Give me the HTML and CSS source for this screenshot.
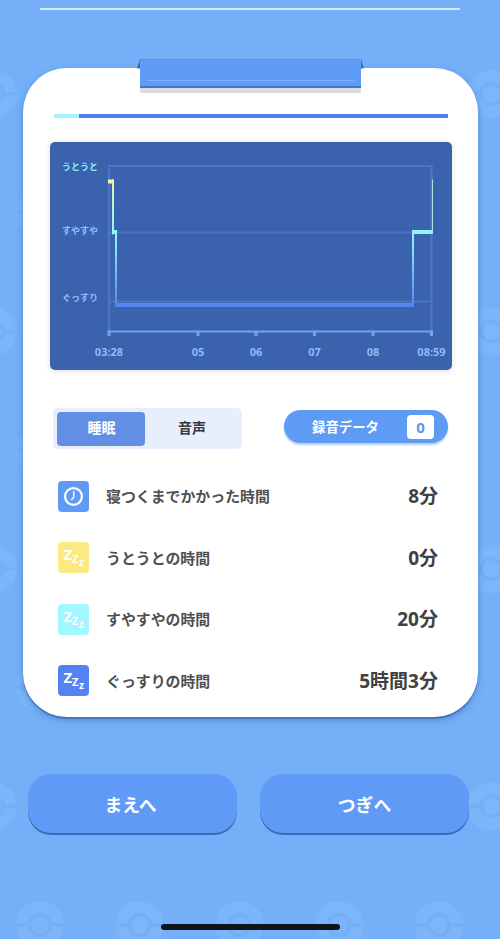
FILE: index.html
```html
<!DOCTYPE html>
<html lang="ja">
<head>
    <meta charset="UTF-8">
    <meta name="viewport" content="width=device-width, initial-scale=1.0">
    <title>睡眠データ</title>
    <link rel="stylesheet" href="styles.css">
</head>
<body>
    <svg class="pattern" width="500" height="939" aria-hidden="true">
        <defs>
            <g id="ball">
                <circle r="17.5" fill="none" stroke="#7cb5fa" stroke-width="13"/>
                <circle r="8.5" fill="#7cb5fa"/>
                <path d="M-24 0H-11M11 0H24" stroke="#74aef7" stroke-width="3"/>
                <circle r="10.5" fill="none" stroke="#74aef7" stroke-width="3"/>
            </g>
            <pattern id="balls" width="99.7" height="237.5" patternUnits="userSpaceOnUse" patternTransform="translate(15.5 -85)">
                <use href="#ball" x="24.5" y="60"/>
                <use href="#ball" x="77" y="179"/>
                <use href="#ball" x="-22.7" y="179"/>
            </pattern>
        </defs>
        <rect width="500" height="939" fill="url(#balls)"/>
    </svg>

    <div class="screen">
        <div class="top-line"></div>

        <main class="card">
            <div class="clip">
                <svg width="228" height="35" viewBox="0 0 228 35">
                    <path d="M3 0L0 9.500H3zM224 0L227 9.500H224z" fill="#3c69b8"/>
                    <rect x="3" y="29" width="221" height="5" fill="#dcdcde"/>
                    <rect x="3" width="221" height="29" fill="#5f9cf7"/>
                    <rect x="3" width="221" height="1" fill="#5590e8"/>
                    <rect x="3" y="27" width="221" height="2" fill="#4277cb"/>
                    <rect x="10" y="21" width="207" height="1" fill="#7eb0fa"/>
                </svg>
            </div>

            <div class="ratio">
                <div class="ratio-light"></div>
                <div class="ratio-deep"></div>
            </div>

            <div class="chart">
                <svg width="402" height="228" viewBox="0 0 402 228">
                    <defs>
                        <linearGradient id="stage" gradientUnits="userSpaceOnUse" x1="0" y1="38" x2="0" y2="163">
                            <stop offset="0" stop-color="#f8f3a0"/>
                            <stop offset="0.15" stop-color="#c4f6c6"/>
                            <stop offset="0.42" stop-color="#93f3fa"/>
                            <stop offset="0.55" stop-color="#87e4fa"/>
                            <stop offset="1" stop-color="#5584f0"/>
                        </linearGradient>
                    </defs>
                    <g stroke="#4b75c2" stroke-width="2" fill="none">
                        <path d="M58 24H382M58 90.500H382M58 159.500H382"/>
                        <path d="M59 23V190M381.500 23V190" stroke-width="2.500"/>
                    </g>
                    <path d="M58 189.500H383" stroke="#6ea4e8" stroke-width="2"/>
                    <path d="M59 188.500V194M148 189V194M206 189V194M264.500 189V194M323 189V194M381.500 188.500V194" stroke="#6ea4e8" stroke-width="3"/>
                    <g fill="url(#stage)">
                        <rect x="58" y="37.500" width="6" height="4"/>
                        <rect x="62" y="37.500" width="2" height="55"/>
                        <rect x="62" y="88" width="5" height="4"/>
                        <rect x="65" y="88" width="2" height="76"/>
                        <rect x="65" y="161" width="299" height="4"/>
                        <rect x="362" y="88" width="2" height="77"/>
                        <rect x="362" y="88" width="21" height="4"/>
                        <rect x="382" y="37.500" width="1" height="54" fill="#a5e6e4"/>
                    </g>
                    <g class="stage-labels">
                        <text x="12" y="27.500" fill="#93eefa">うとうと</text>
                        <text x="12" y="92" fill="#90c2fb">すやすや</text>
                        <text x="12" y="158.500" fill="#9cbcfa">ぐっすり</text>
                    </g>
                    <g class="time-labels">
                        <text x="59" y="214">03:28</text>
                        <text x="148" y="214">05</text>
                        <text x="206" y="214">06</text>
                        <text x="264.500" y="214">07</text>
                        <text x="323" y="214">08</text>
                        <text x="381.500" y="214">08:59</text>
                    </g>
                </svg>
            </div>

            <div class="controls">
                <div class="tabs">
                    <button class="tab active">睡眠</button>
                    <button class="tab">音声</button>
                </div>
                <button class="record">
                    <span class="record-label">録音データ</span>
                    <span class="count">0</span>
                </button>
            </div>

            <ul class="stats">
                <li class="stat">
                    <svg class="icon icon-clock" viewBox="0 0 31 31">
                        <circle cx="15.500" cy="15.500" r="8.400" fill="none" stroke="#fff" stroke-width="2.200"/>
                        <path d="M15.800 10V16L13.300 19" fill="none" stroke="#fff" stroke-width="1.400"/>
                    </svg>
                    <span class="stat-name">寝つくまでかかった時間</span>
                    <span class="stat-value">8分</span>
                </li>
                <li class="stat">
                    <svg class="icon icon-doze" viewBox="0 0 31 31">
                        <text x="5.500" y="18" font-size="15">Z</text>
                        <text x="14" y="21" font-size="11">Z</text>
                        <text x="21" y="23.500" font-size="10">z</text>
                    </svg>
                    <span class="stat-name">うとうとの時間</span>
                    <span class="stat-value">0分</span>
                </li>
                <li class="stat">
                    <svg class="icon icon-light" viewBox="0 0 31 31">
                        <text x="5.500" y="18" font-size="15">Z</text>
                        <text x="14" y="21" font-size="11">Z</text>
                        <text x="21" y="23.500" font-size="10">z</text>
                    </svg>
                    <span class="stat-name">すやすやの時間</span>
                    <span class="stat-value">20分</span>
                </li>
                <li class="stat">
                    <svg class="icon icon-deep" viewBox="0 0 31 31">
                        <text x="5.500" y="18" font-size="15">Z</text>
                        <text x="14" y="21" font-size="11">Z</text>
                        <text x="21" y="23.500" font-size="10">z</text>
                    </svg>
                    <span class="stat-name">ぐっすりの時間</span>
                    <span class="stat-value">5時間3分</span>
                </li>
            </ul>
        </main>

        <nav class="nav">
            <button class="nav-button prev">まえへ</button>
            <button class="nav-button">つぎへ</button>
        </nav>

        <div class="home-bar"></div>
    </div>
</body>
</html>
```

FILE: styles.css
```css
* {
    box-sizing: border-box;
}

body {
    margin: 0;
    background-color: #74aff8;
    font-family: "Noto Sans", "Noto Sans CJK JP", sans-serif;
    font-weight: bold;
    color: #444;
}

button {
    border: none;
    padding: 0;
    font: inherit;
    cursor: pointer;
}

/* Background pattern, sits behind everything */
.pattern {
    position: absolute;
    top: 0;
    left: 0;
    z-index: -1;
}

.screen {
    width: 500px;
    height: 939px;
    padding-top: 8px;
    overflow: hidden;
    display: flex;
    flex-direction: column;
}

.top-line {
    height: 2px;
    margin: 0 40px;
    background-color: #d3eafa;
    flex-shrink: 0;
}

/* Card */
.card {
    position: relative;
    width: 455px;
    height: 648.5px;
    margin: 58px 0 0 22.5px;
    padding-top: 46px;
    background-color: #fff;
    border-radius: 44px;
    box-shadow: 0 2px 0 #4575bd, 0 3px 7px rgba(40, 90, 160, 0.45);
    flex-shrink: 0;
}

.clip {
    position: absolute;
    top: -9px;
    left: 114.5px;
}

.clip svg {
    display: block;
}

.ratio {
    display: flex;
    height: 4px;
    margin: 0 29.5px 0 31px;
}

.ratio-light {
    width: 25px;
    background-color: #a2f5fa;
}

.ratio-deep {
    flex: 1;
    background-color: #557fe8;
}

.chart {
    width: 402px;
    height: 228px;
    margin: 24.4px 0 0 27.5px;
    background-color: #3a62ad;
    border-radius: 5px;
    box-shadow: 0 1px 6px rgba(80, 80, 120, 0.18);
}

.chart svg {
    display: block;
}

.stage-labels {
    font-size: 9px;
}

.time-labels {
    font-size: 11px;
    fill: #8cbcf8;
    text-anchor: middle;
}

/* Tabs and recording button */
.controls {
    display: flex;
    justify-content: space-between;
    align-items: flex-start;
    margin: 37.6px 29.5px 0 30.5px;
}

.tabs {
    display: flex;
    width: 189px;
    height: 41px;
    padding: 4px;
    background-color: #e7effd;
    border-radius: 5px;
}

.tab {
    flex: 1;
    height: 34px;
    background: none;
    padding: 0 0 2px 1px;
    font-size: 14px;
    line-height: 32px;
    color: #38393f;
}

.tab.active {
    flex: 0 0 88px;
    background-color: #628fe4;
    border-radius: 4px;
    color: #fff;
}

.record {
    display: flex;
    justify-content: space-between;
    align-items: center;
    width: 164px;
    height: 33px;
    margin-top: 2.5px;
    padding: 0 14px 0 28px;
    background-color: #5e9bf5;
    border-radius: 17px;
    box-shadow: 0 2px 2px #b5cdf2;
    color: #fff;
}

.record-label {
    padding-bottom: 1px;
    font-size: 13.4px;
}

.count {
    width: 27px;
    height: 24px;
    background-color: #fff;
    border-radius: 4px;
    font-size: 15px;
    line-height: 24px;
    color: #5e97ee;
}

/* Sleep times */
.stats {
    display: flex;
    flex-direction: column;
    gap: 30.5px;
    margin: 32px 39.5px 0 35.5px;
    padding: 0;
    list-style: none;
}

.stat {
    display: flex;
    align-items: center;
    height: 31px;
}

.icon {
    width: 31px;
    height: 31px;
    border-radius: 4px;
    fill: #fff;
}

.icon-clock {
    background-color: #5f9bf5;
}

.icon-doze {
    background-color: #fbe983;
}

.icon-light {
    background-color: #a2f8ff;
}

.icon-deep {
    background-color: #5584f2;
}

.stat-name {
    margin-left: 17px;
    padding-bottom: 1px;
    font-size: 14.9px;
    color: #505050;
}

.stat-value {
    margin-left: auto;
    padding-bottom: 2px;
    font-size: 19px;
    color: #414141;
}

/* Bottom buttons */
.nav {
    display: flex;
    justify-content: space-between;
    margin: 57.5px 31px 0 28px;
}

.nav-button {
    width: 209px;
    height: 59px;
    background-color: #5f9bf6;
    border-radius: 23px;
    box-shadow: 0 2px 0 #366fb9;
    font-size: 17.8px;
    color: #fff;
}

.nav-button.prev {
    padding-right: 4px;
}

.home-bar {
    width: 179px;
    height: 6px;
    margin: 91px 0 0 161px;
    background-color: #10151b;
    border-radius: 3px;
}
```
